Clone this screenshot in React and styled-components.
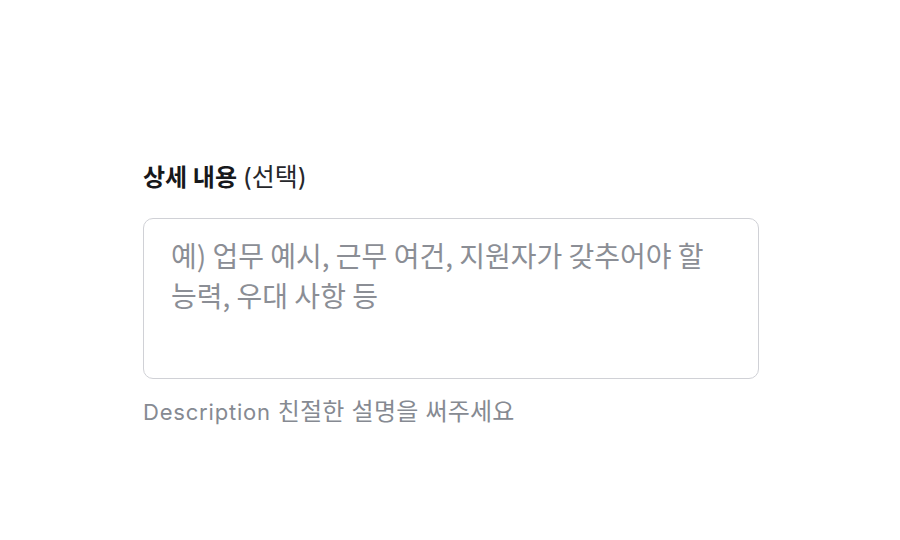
import React from "react";
import styled, { createGlobalStyle } from "styled-components";

const GlobalStyle = createGlobalStyle`
  html, body {
    margin: 0;
    padding: 0;
    background: #ffffff;
  }
  body {
    font-family: Inter, "Noto Sans CJK KR", sans-serif;
  }
`;

const Page = styled.div`
  width: 900px;
  height: 540px;
  box-sizing: border-box;
  padding: 160px 0 0 143px;
`;

const Field = styled.div`
  display: flex;
  flex-direction: column;
  width: 616px;
`;

const Label = styled.label`
  display: block;
  font-family: Inter, "Noto Sans CJK KR", sans-serif;
  font-size: 24px;
  line-height: 34px;
  font-weight: 700;
  color: #17181b;
  margin-bottom: 23px;
`;

const Optional = styled.span`
  font-size: 25px;
  font-weight: 400;
  color: #26272b;
`;

const TextArea = styled.textarea`
  display: block;
  width: 100%;
  height: 161px;
  box-sizing: border-box;
  padding: 16px 27px;
  border: 1.5px solid #d0d1d6;
  border-radius: 10px;
  resize: none;
  outline: none;
  font-family: "Noto Sans CJK KR", sans-serif;
  font-size: 28px;
  line-height: 40px;
  color: #1b1c1f;
  background: #ffffff;

  &::placeholder {
    color: #8b8e95;
  }
`;

const Helper = styled.p`
  margin: 18px 0 0;
  font-family: Inter, "Noto Sans CJK KR", sans-serif;
  font-size: 22px;
  line-height: 30px;
  letter-spacing: 0.8px;
  color: #868a92;
`;

const HelperKo = styled.span`
  font-size: 24px;
  letter-spacing: 0.2px;
`;

export default function App() {
  return (
    <>
      <GlobalStyle />
      <Page>
        <Field>
          <Label htmlFor="detail">
            상세 내용 <Optional>(선택)</Optional>
          </Label>
          <TextArea
            id="detail"
            placeholder="예) 업무 예시, 근무 여건, 지원자가 갖추어야 할 능력, 우대 사항 등"
          />
          <Helper>
            Description <HelperKo>친절한 설명을 써주세요</HelperKo>
          </Helper>
        </Field>
      </Page>
    </>
  );
}
